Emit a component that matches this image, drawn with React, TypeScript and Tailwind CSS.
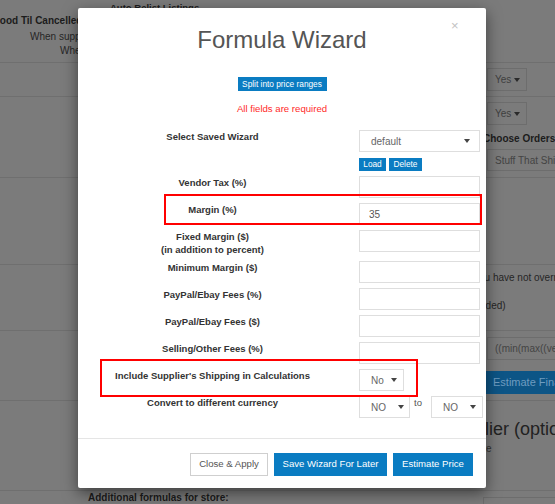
import React from "react";

const Caret = ({ color = "#444" }: { color?: string }) => (
  <svg width="6" height="4" viewBox="0 0 6 4" className="flex-none">
    <path d="M0 0h6L3 4z" fill={color} />
  </svg>
);

function BgSelect({ text, w }: { text: string; w: string }) {
  return (
    <div className={`${w} h-[23px] border border-[#6d6d6d] flex items-center justify-between pl-[7px] pr-[6px] text-[10px] text-[#404040]`}>
      <span>{text}</span>
      <Caret color="#2a2a2a" />
    </div>
  );
}

function BackgroundPage() {
  return (
    <div className="flex flex-col text-[10px] text-[#262626]">
      <div className="h-[63px] border-b border-[#6f6f6f] flex">
        <div className="w-[100px] flex-none pt-[14px] leading-[13px] whitespace-nowrap">
          <div className="ml-[-8px] font-bold text-[#1c1c1c]">Good Til Cancelled</div>
          <div className="pl-[30px] mt-[3px]">When supplier is out of stock</div>
          <div className="pl-[60px] mt-[1px]">When back in stock</div>
        </div>
        <div className="pl-[10px] pt-[2px] font-bold leading-[12px] text-[9.5px] text-[#1c1c1c] whitespace-nowrap">
          Auto Relist Listings
        </div>
      </div>
      <div className="h-[34px] border-b border-[#6f6f6f] flex">
        <div className="w-[487px] flex-none" />
        <div className="pt-[5px]">
          <BgSelect text="Yes" w="w-[40px]" />
        </div>
      </div>
      <div className="h-[81px] border-b border-[#6f6f6f] flex">
        <div className="w-[487px] flex-none" />
        <div className="pt-[5px] flex flex-col whitespace-nowrap">
          <BgSelect text="Yes" w="w-[40px]" />
          <div className="mt-[8px] ml-[-4px] font-bold leading-[12px] text-[10px] text-[#1c1c1c]">Choose Orders</div>
          <div className="mt-[4px] h-[22px] w-[90px] border border-[#6d6d6d] flex items-center pl-[7px] text-[#444]">
            Stuff That Shines
          </div>
        </div>
      </div>
      <div className="h-[87px] border-b border-[#6f6f6f]" />
      <div className="h-[66px] border-b border-[#6f6f6f] flex">
        <div className="w-[487px] flex-none" />
        <div className="pt-[6px] flex flex-col leading-[13px] whitespace-nowrap">
          <div className="ml-[-13px]">you have not overridden</div>
          <div className="mt-[15px] ml-[-52px]">(recommended)</div>
        </div>
      </div>
      <div className="h-[70px] border-b border-[#6f6f6f] flex">
        <div className="w-[487px] flex-none" />
        <div className="pt-[6px] flex flex-col whitespace-nowrap">
          <div className="h-[23px] w-[90px] border border-[#6d6d6d] flex items-center pl-[7px] text-[#444]">
            {"((min(max((vendor"}
          </div>
          <div className="mt-[11px] ml-[-1px] h-[23px] w-[90px] bg-[#0d5586] flex items-center pl-[7px] text-[11px] text-[#6f9cc0]">
            Estimate Final Price
          </div>
        </div>
      </div>
      <div className="h-[90px] border-b border-[#6f6f6f] flex">
        <div className="w-[487px] flex-none" />
        <div className="pt-[17px] flex flex-col whitespace-nowrap">
          <div className="ml-[-44px] text-[18px] leading-[22px] text-[#222]">Supplier (optional)</div>
          <div className="mt-[3px] ml-[-36px] leading-[12px] text-[#333]">this store</div>
        </div>
      </div>
      <div className="flex">
        <div className="w-[487px] flex-none pl-[88px] pt-[1px] font-bold leading-[12px] text-[#1c1c1c]">
          Additional formulas for store:
        </div>
        <div className="pt-[6px]">
          <div className="ml-[-4px] h-[23px] w-[80px] border border-[#6d6d6d]" />
        </div>
      </div>
    </div>
  );
}

function Sel({ text, w, pr, pl = "pl-[11px]" }: { text: string; w: string; pr: string; pl?: string }) {
  return (
    <div className={`${w} ${pr} ${pl} h-[22px] flex-none border border-[#dedede] flex items-center justify-between font-normal text-[10px] text-[#666]`}>
      <span>{text}</span>
      <Caret />
    </div>
  );
}

function TextInput({ value = "" }: { value?: string }) {
  return (
    <input
      readOnly
      value={value}
      className="block w-[121px] h-[22px] border border-[#dedede] pl-[9px] text-[10px] text-[#555] outline-none font-['Liberation_Sans',Arial,sans-serif]"
    />
  );
}

function Row({ label, children }: { label: React.ReactNode; children: React.ReactNode }) {
  return (
    <div className="flex pl-[22px]">
      <div className="w-[225px] flex-none text-center font-bold leading-[13px] text-[#333]">{label}</div>
      <div className="ml-[34px]">{children}</div>
    </div>
  );
}

function Modal() {
  const blue = "bg-[#0a7cc2]";
  return (
    <div className="absolute left-[78px] top-[8px] w-[408px] h-[480px] bg-white rounded-[2px] shadow-[0_5px_15px_rgba(0,0,0,0.5)] flex flex-col">
      <div className="relative pt-[17px] text-center">
        <h2 className="text-[24px] leading-[30px] text-[#555]">Formula Wizard</h2>
        <span className="absolute left-[373px] top-[11px] text-[13px] leading-[14px] text-[#c2c2c2]">×</span>
      </div>
      <div className="flex flex-col items-center">
        <button className={`mt-[22px] w-[89px] h-[14px] ${blue} text-white text-[8.3px] leading-[14px] whitespace-nowrap`}>
          Split into price ranges
        </button>
        <div className="mt-[12px] text-[9.6px] leading-[12px] text-[#ff2a2a]">All fields are required</div>
      </div>
      <div className="mt-[15px] flex flex-col gap-[5px] text-[9.5px]">
        <Row label="Select Saved Wizard">
          <Sel text="default" w="w-[121px]" pr="pr-[9px]" />
          <div className="mt-[6px] flex gap-[3px]">
            <button className={`w-[27px] h-[13px] ${blue} text-white text-[8.3px] leading-[13px]`}>Load</button>
            <button className={`w-[33px] h-[13px] ${blue} text-white text-[8.3px] leading-[13px]`}>Delete</button>
          </div>
        </Row>
        <Row label="Vendor Tax (%)">
          <TextInput />
        </Row>
        <Row label="Margin (%)">
          <TextInput value="35" />
        </Row>
        <Row
          label={
            <>
              Fixed Margin ($)
              <br />
              (in addition to percent)
            </>
          }
        >
          <TextInput />
        </Row>
        <Row label="Minimum Margin ($)">
          <TextInput />
        </Row>
        <Row label="PayPal/Ebay Fees (%)">
          <TextInput />
        </Row>
        <Row label="PayPal/Ebay Fees ($)">
          <TextInput />
        </Row>
        <Row label="Selling/Other Fees (%)">
          <TextInput />
        </Row>
        <Row label="Include Supplier's Shipping in Calculations">
          <Sel text="No" w="w-[45px]" pr="pr-[6px]" />
        </Row>
        <Row label="Convert to different currency">
          <div className="flex items-start">
            <Sel text="NO" w="w-[51px]" pr="pr-[5px]" />
            <span className="ml-[4px] mt-[1px] font-normal text-[9.5px] leading-[12px] text-[#555]">to</span>
            <div className="ml-[9px]">
              <Sel text="NO" w="w-[52px]" pr="pr-[6px]" />
            </div>
          </div>
        </Row>
      </div>
      <div className="mt-auto border-t border-[#e5e5e5] pt-[14px] pb-[12px] pr-[13px] flex justify-end gap-[6px] text-[9.6px]">
        <button className="w-[78px] h-[23px] border border-[#cfcfcf] bg-white text-[#555]">Close &amp; Apply</button>
        <button className={`w-[113px] h-[23px] ${blue} text-white`}>Save Wizard For Later</button>
        <button className={`w-[80px] h-[23px] ${blue} text-white`}>Estimate Price</button>
      </div>
      <div className="absolute left-[86px] top-[186px] w-[318px] h-[31px] border-[2.5px] border-[#ff0000]" />
      <div className="absolute left-[22px] top-[351px] w-[318px] h-[38px] border-[2.5px] border-[#ff0000]" />
    </div>
  );
}

export default function App() {
  return (
    <div className="relative w-[555px] h-[504px] overflow-hidden bg-[#7b7b7b] font-['Liberation_Sans',Arial,sans-serif]">
      <BackgroundPage />
      <Modal />
    </div>
  );
}
